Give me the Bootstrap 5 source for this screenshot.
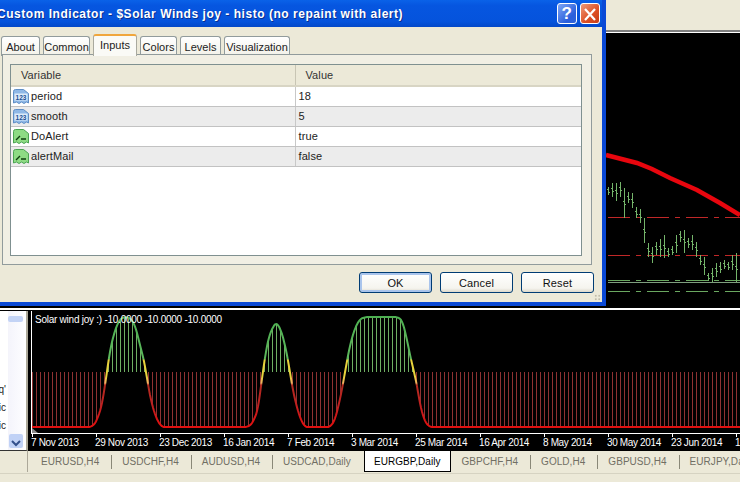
<!DOCTYPE html>
<html lang="en">
<head>
<meta charset="UTF-8">
<title>Custom Indicator</title>
<link href="https://cdn.jsdelivr.net/npm/bootstrap@5.3.3/dist/css/bootstrap.min.css" rel="stylesheet">
<style>
 html,body{margin:0;background:#ece9d8;overflow:hidden}
 .desk{position:relative;width:740px;height:482px;overflow:hidden;background:#ece9d8;font:11px "Liberation Sans",Arial,sans-serif;color:#222}
 .top-strip{height:30px;flex:none;background:#ece9d8}
 .price-pane{height:278px;flex:none;background:#000;border-top:2px solid #808080;box-shadow:inset 0 1px 0 #fff}
 .price-pane svg,.ind-pane svg{display:block}
 .pane-sep{height:3px;flex:none;background:#fff;border-bottom:1px solid #000}
 .lower{height:140px;flex:none}
 .side-list{width:28px;background:#fff;position:relative;border-right:2px solid #aca899;border-bottom:1px solid #333;color:#222;font-size:10px;line-height:18px}
 .side-list span{position:absolute;right:20px}
 .side-scroll{position:absolute;left:8px;top:0;width:16px;bottom:0;background:linear-gradient(90deg,#f4f4fb,#fdfdff)}
 .side-thumb{position:absolute;left:0;top:5px;width:15px;height:6px;border-radius:2px;background:#c3d3f5}
 .side-btn{position:absolute;left:1px;bottom:2px;width:14px;height:14px;border-radius:2px;background:#c1d2f6}
 .ind-pane{width:712px;background:#000}
 .symbol-tabs{height:22px;flex:none;color:#716f64;font-size:10px;background:#ece9d8;padding-top:1px}
 .sym-lead{width:31px;flex:none;position:relative}
 .sym-lead::before{content:"";position:absolute;left:27px;top:-1px;height:21px;border-left:1px solid #aca899}
 .symbol-tabs .sym-item{flex:none;height:14px;margin-top:3px;border-right:1px solid #8a8878;padding:0 12px 0 10px;line-height:14px;letter-spacing:.05px}
 .symbol-tabs .sym-item.active-sym{height:21px;margin-top:-1px;margin-left:3px;background:#fff;color:#000;border:1px solid #000;border-top:0;padding:3px 10px 0 9px;line-height:15px}
 .symbol-tabs .sym-item.no-sep{border-right:0;padding-right:10px}
 .status-strip{height:10px;flex:none;border-top:1px solid #d6d3c2;background:#ece9d8}

 .dlg{position:absolute;left:-3px;top:0;width:609px;height:306px;background:#0a49d6;padding:0 4px 4px 3px}
 .dlg-title{height:27px;background:linear-gradient(#0a62e8,#0656e0 20%,#0553dc 80%,#0348c8);color:#fff;font:bold 12px "Liberation Sans",Arial,sans-serif;white-space:nowrap;letter-spacing:.53px;line-height:28px;padding-right:2px}
 .dlg-title-text{margin-left:-3px;text-shadow:1px 1px 0 #0a2f90}
 .cap-btn{width:20px;height:21px;border:1px solid #fff;border-radius:3px;font:bold 17px/19px "Liberation Sans",sans-serif;text-align:center;margin-top:3px}
 .cap-help{background:linear-gradient(135deg,#7fa6f4,#2a5fdc 70%,#2f63d8);margin-right:3px}
 .cap-close{background:linear-gradient(135deg,#ef9a78,#dc4f24 60%,#c63d18)}
 .dlg-body{height:275px;background:#ece9d8;position:relative}
 .dlg-tabs{padding:7px 0 0 1px;height:27px;border:0;gap:3px;flex-wrap:nowrap}
 .dlg-tabs .nav-link{height:20px;margin:2px 0 0;padding:3px 0 0;text-align:center;font-size:11px;line-height:14px;color:#222;background:linear-gradient(#fff,#f2f1e8);border:1px solid #919b9c;border-bottom:0;border-radius:3px 3px 0 0}
 .dlg-tabs .nav-link.active{height:22px;margin-top:0;background:#fafaf6;color:#222;border-top:2px solid #f0a63c;border-left-color:#a9a99e;border-right-color:#a9a99e;position:relative;z-index:2;line-height:13px}
 .tab-w1{width:39px}.tab-w2{width:47px}.tab-w3{width:44px}.tab-w4{width:37px}.tab-w5{width:41px}.tab-w6{width:66px}
 .dlg-panel{margin:0 10px 0 2px;height:211px;border:1px solid #919b9c;background:#f1efe4;padding:9px 9px 8px 7px;position:relative;z-index:1}
 .var-box{height:192px;border:1px solid #7f9090;background:#fff;overflow:hidden}
 .var-table{table-layout:fixed;width:571px;margin:0;font-size:11px;color:#222;--bs-table-bg:transparent;--bs-table-border-color:#c2c2c2;letter-spacing:.1px}
 .var-table th,.var-table td{padding:0;height:20px;line-height:18px;vertical-align:middle;font-weight:400;border-bottom:1px solid #c2c2c2;white-space:nowrap;box-shadow:none}
 .var-table th{height:21px;background:#ece9d8;border-bottom:2px solid #d8d5c4;color:#333}
 .var-table th:first-child{padding-left:10px;border-right:1px solid #c8c5b4}
 .var-table th:last-child{padding-left:10px}
 .var-table td:first-child{border-right:1px solid #c8c8c8}
 .var-table td:last-child{padding-left:3px}
 .var-table tr.alt td{background:#ececec}
 .var-ico{vertical-align:middle;margin:-2px 2px 0 2px}
 .dlg-actions{margin:7px 8px 0 0;gap:8px;position:relative}
 .xp-btn{width:73px;height:21px;padding:0;font-size:11px;line-height:18px;color:#111;border:1px solid #003c74;border-radius:3px;background:linear-gradient(#fff,#f5f4ee 80%,#dcd8cb);letter-spacing:.15px}
 .xp-btn-def{box-shadow:inset 0 0 0 2px #a9c4ec}
 .dlg-grip{position:absolute;right:1px;bottom:1px;width:7px;height:7px;background:radial-gradient(circle,#c0bcaa 1px,transparent 1.3px) 0 0/3.5px 3.5px}
</style>
</head>
<body>
<div class="desk d-flex flex-column">
  <div class="top-strip"></div>
  <div class="price-pane"><svg id="priceChart" width="740" height="276" viewBox="0 32 740 276"></svg></div>
  <div class="pane-sep"></div>
  <div class="lower d-flex">
    <div class="side-list">
      <span style="top:70px">q'</span>
      <span style="top:88px">ic</span>
      <span style="top:106px">ic</span>
      <div class="side-scroll">
        <div class="side-thumb"></div>
        <div class="side-btn">
          <svg width="14" height="14" viewBox="0 0 14 14"><path d="M3 5l4 4 4-4" fill="none" stroke="#33508c" stroke-width="2"/></svg>
        </div>
      </div>
    </div>
    <div class="ind-pane"><svg id="indChart" width="712" height="140" viewBox="28 311 712 140"></svg></div>
  </div>
  <div class="symbol-tabs d-flex" id="symTabs"></div>
  <div class="status-strip"></div>

  <!-- properties dialog -->
  <div class="dlg">
    <div class="dlg-title d-flex">
      <div class="dlg-title-text flex-grow-1">Custom Indicator - $Solar Winds joy - histo (no repaint with alert)</div>
      <div class="cap-btn cap-help">?</div>
      <div class="cap-btn cap-close">
        <svg width="18" height="19" viewBox="0 0 18 19"><path d="M4 4l10 11M14 4L4 15" stroke="#fff" stroke-width="2.2" fill="none"/></svg>
      </div>
    </div>
    <div class="dlg-body">
      <ul class="nav nav-tabs dlg-tabs">
        <li class="nav-item"><a class="nav-link tab-w1">About</a></li>
        <li class="nav-item"><a class="nav-link tab-w2">Common</a></li>
        <li class="nav-item"><a class="nav-link active tab-w3">Inputs</a></li>
        <li class="nav-item"><a class="nav-link tab-w4">Colors</a></li>
        <li class="nav-item"><a class="nav-link tab-w5">Levels</a></li>
        <li class="nav-item"><a class="nav-link tab-w6">Visualization</a></li>
      </ul>
      <div class="dlg-panel">
        <div class="var-box">
          <table class="table var-table">
            <colgroup><col style="width:284px"><col></colgroup>
            <thead><tr><th>Variable</th><th>Value</th></tr></thead>
            <tbody id="varRows"></tbody>
          </table>
        </div>
      </div>
      <div class="dlg-actions d-flex justify-content-end">
        <button class="btn xp-btn xp-btn-def">OK</button>
        <button class="btn xp-btn">Cancel</button>
        <button class="btn xp-btn">Reset</button>
      </div>
      <div class="dlg-grip"></div>
    </div>
  </div>
</div>

<script src="https://cdn.jsdelivr.net/npm/bootstrap@5.3.3/dist/js/bootstrap.bundle.min.js"></script>
<script>
/* input rows */
const sheet = 'M.5 3.5q0-2 2-2h8l5 4v9.5l-2-1-2.5 1.5-2.5-1.5-2.5 1.5-2.5-1.5-3 1z';
const icoNum = `<svg class="var-ico" width="16" height="17" viewBox="0 0 16 17">
  <path d="${sheet}" fill="#8fb8e6" stroke="#5f8fc6"/>
  <rect x="1.5" y="5.5" width="13" height="7" fill="#dcebf9"/>
  <text x="8" y="11.5" text-anchor="middle" font-family="Liberation Sans" font-weight="700" font-size="6.5" fill="#1c4f94">123</text></svg>`;
const icoBool = `<svg class="var-ico" width="16" height="17" viewBox="0 0 16 17">
  <path d="${sheet}" fill="#8edb84" stroke="#4aa452"/>
  <path d="M3 12l4-4M8 11h5" fill="none" stroke="#10400f" stroke-width="1.4"/></svg>`;
const vars = [
  [icoNum,'period','18'],
  [icoNum,'smooth','5'],
  [icoBool,'DoAlert','true'],
  [icoBool,'alertMail','false']
];
document.getElementById('varRows').innerHTML = vars.map((v,i)=>
  `<tr class="${i%2?'alt':''}"><td>${v[0]}${v[1]}</td><td>${v[2]}</td></tr>`).join('');

/* symbol tabs */
const syms = ['EURUSD,H4','USDCHF,H4','AUDUSD,H4','USDCAD,Daily','EURGBP,Daily','GBPCHF,H4','GOLD,H4','GBPUSD,H4','EURJPY,Daily'];
document.getElementById('symTabs').innerHTML = '<div class="sym-lead"></div>' + syms.map(s=>{
  let c = '';
  if(s=='EURGBP,Daily') c='active-sym';
  if(s=='USDCAD,Daily') c='no-sep';
  return `<div class="sym-item ${c}">${s}</div>`;
}).join('');

/* price chart */
const bars = [[50,75],[40,80],[40,92],[35,80],[55,143],[65,100],[70,115],[110,145],[118,160],[145,220],[218,260],[232,278],[215,255],[207,262],[195,265],[235,260],[228,255],[195,250],[182,215],[180,248],[205,235],[195,240],[215,260],[255,285],[260,315],[310,332],[295,335],[280,320],[275,310],[270,298],[275,300],[255,300],[250,335]];
let p = '';
function hline(y,col,dash){ p += `<line x1="608" x2="740" y1="${y}" y2="${y}" stroke="${col}" ${dash?'stroke-dasharray="'+dash+'"':''} shape-rendering="crispEdges"/>`; }
hline(217.5,'#c02828','22 6 5 6');
hline(255.5,'#c02828','22 6 5 6');
hline(280.5,'#6aa860','22 6 5 6');
hline(282.5,'#7e9e7e');
hline(291.5,'#6aa860','22 6 5 6');
bars.forEach((b,i)=>{
  const x = 608.5+4*i, y1 = 170+b[0]/3, y2 = 170+b[1]/3, m = (y1+y2)/2;
  p += `<path d="M${x} ${y1}V${y2}M${x-1.5} ${Math.round(m)-1.5}h1.5M${x} ${Math.round(m)+1.5}h1.5" stroke="#74b46a" fill="none" shape-rendering="crispEdges"/>`;
});
p += `<polyline points="606,155 637,163 652,169 670,178 697,190 720,203 740,215" fill="none" stroke="#e8060e" stroke-width="4.5"/>`;
document.getElementById('priceChart').innerHTML = p;

/* indicator chart: curve points are [x,y] in page pixels */
const curve = [[32,427],[90,427],[94,425],[97,420],[102,405],[105,385],[107,372],[110,350],[115,330],[120,319],[125,317],[130,318],[135,325],[140,345],[145,365],[148,385],[152,405],[157,420],[162,427],
  [247,427],[252,424],[258,410],[261,385],[263,372],[266,350],[270,333],[276,322],[281,330],[285,345],[288,360],[292,385],[295,400],[300,418],[305,427],
  [330,427],[335,420],[341,395],[345,372],[350,345],[355,328],[360,319],[366,317],[397,317],[402,320],[406,335],[410,355],[414,372],[417,385],[420,405],[425,422],[430,427],[740,427]];
function rawY(x){
  if(x<=32) return 427;
  for(let i=1;i<curve.length;i++){
    if(x<=curve[i][0]){
      const a=curve[i-1],b=curve[i];
      return a[1]+(b[1]-a[1])*(x-a[0])/(b[0]-a[0]);
    }
  }
  return 427;
}
/* small moving average so the humps come out round */
function curveY(x){
  let t=0;
  for(let d=-2;d<=2;d++) t+=rawY(x+d);
  return t/5;
}
const stop = (y,c)=>`<stop offset="${(y-311)/120}" stop-color="${c}"/>`;
let s = `<defs><linearGradient id="lineCol" gradientUnits="userSpaceOnUse" x1="0" x2="0" y1="311" y2="431">
  ${stop(311,'#4caf50')}${stop(359,'#5cb85c')}${stop(360,'#e8d23c')}${stop(376,'#e8d23c')}${stop(383,'#f0b060')}${stop(385,'#b02a20')}${stop(405,'#c02020')}${stop(425,'#e01010')}</linearGradient></defs>`;
for(let x=32;x<740;x+=4){
  const y = curveY(x);
  const col = y<372 ? '#6fae62' : '#8e3232';
  s += `<line x1="${x+.5}" x2="${x+.5}" y1="372" y2="${y}" stroke="${col}" shape-rendering="crispEdges"/>`;
}
let pts = [];
for(let x=32;x<=740;x++) pts.push(x+','+curveY(x).toFixed(1));
s += `<polyline points="${pts.join(' ')}" fill="none" stroke="url(#lineCol)" stroke-width="2" stroke-linejoin="round"/>`;
s += `<text x="35" y="323" fill="#fff" font-family="Liberation Sans" font-size="10" letter-spacing="-.25">Solar wind joy :) -10.0000 -10.0000 -10.0000</text>`;
s += `<path d="M31.5 311V433.5H740" fill="none" stroke="#fff" shape-rendering="crispEdges"/><path d="M32 428l6 5h-6z" fill="#8a8a8a"/>`;
const dates = ['7 Nov 2013','29 Nov 2013','23 Dec 2013','16 Jan 2014','7 Feb 2014','3 Mar 2014','25 Mar 2014','16 Apr 2014','8 May 2014','30 May 2014','23 Jun 2014','15 Jul 2014'];
dates.forEach((d,i)=>{
  const x = 32+64*i;
  s += `<line x1="${x+.5}" x2="${x+.5}" y1="433" y2="437" stroke="#fff" shape-rendering="crispEdges"/>`;
  s += `<text x="${x-1}" y="446" fill="#fff" font-family="Liberation Sans" font-size="10" letter-spacing="-.35">${d}</text>`;
});
document.getElementById('indChart').innerHTML = s;
</script>
</body>
</html>
